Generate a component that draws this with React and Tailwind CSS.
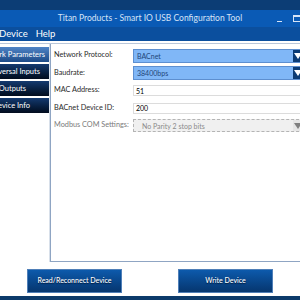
import React from 'react';

const font = { fontFamily: 'Lato, "Noto Sans", sans-serif' };

const NavItem = ({ label, active, pad }) => (
  <div
    className={`h-[15px] flex items-center justify-end overflow-hidden whitespace-nowrap text-[7.5px] text-white ${pad} ${
      active
        ? 'bg-gradient-to-b from-[#4f84c6] to-[#1d4b88]'
        : 'bg-gradient-to-b from-[#143a70] to-[#020c1e]'
    }`}
  >
    <span className="shrink-0">{label}</span>
  </div>
);

const Arrow = ({ muted }) => (
  <div
    className={`w-[10px] h-full flex items-center justify-center ${
      muted ? 'bg-[#e6e6e6]' : 'bg-[#0b3b74]'
    }`}
  >
    <svg width="8" height="6" viewBox="0 0 8 6">
      <path d="M0 0 L8 0 L4 6 Z" fill={muted ? '#808080' : '#ffffff'} />
    </svg>
  </div>
);

const Row = ({ label, muted, pad, children }) => (
  <div className="flex items-center h-[17.5px]">
    <div
      className={`w-[79px] shrink-0 whitespace-nowrap text-[7.3px] ${
        muted ? 'text-[#7a7a7a]' : 'text-[#2a2a2a]'
      }`}
    >
      {label}
    </div>
    <div className={`flex-1 h-full ${pad}`}>{children}</div>
  </div>
);

export default function App() {
  return (
    <div className="w-[300px] h-[300px] overflow-hidden bg-white flex flex-col" style={font}>
      <div className="h-[10px] bg-[#0c3d75]" />
      <div className="h-[17px] bg-[#0a5ab5] relative flex items-center justify-center">
        <span className="text-[8.5px] text-[#d6e4f7] whitespace-nowrap">
          Titan Products - Smart IO USB Configuration Tool
        </span>
        <div className="absolute right-0 top-0 h-full flex items-center gap-[11px]">
          <div className="w-[5px] h-[1px] bg-[#d6e4f7] mt-[6px]" />
          <div className="w-[8px] h-[7px] border border-[#d6e4f7] border-t-2 mr-[-1px]" />
        </div>
      </div>
      <div className="h-[14px] bg-[#0b4f9e] flex items-center gap-[8px] text-[9.5px] text-white">
        <span className="ml-[-1px]">Device</span>
        <span>Help</span>
      </div>
      <div className="h-[2px] bg-white" />
      <div className="h-[1px] bg-[#b9c7da]" />
      <div className="flex h-[218px]">
        <div className="w-[50px] shrink-0 flex flex-col gap-[2px] pt-[3px] border-r border-[#d8e0ea]">
          <NavItem label="Network Parameters" active pad="pr-[4px]" />
          <NavItem label="Universal Inputs" pad="pr-[9px]" />
          <NavItem label="Outputs" pad="pr-[23px]" />
          <NavItem label="Device Info" pad="pr-[19px]" />
        </div>
        <div className="flex-1 border-l border-b border-[#8fa5c3] pl-[3px] pt-[3px] mr-[-4px]">
          <Row label="Network Protocol:" pad="py-[1.75px]">
            <div className="h-full flex border border-[#5d8fd0] bg-[#80b7f7]">
              <div className="flex-1 pl-[3px] text-[7px] text-[#20467a] flex items-center">BACnet</div>
              <Arrow />
            </div>
          </Row>
          <Row label="Baudrate:" pad="py-[1.75px]">
            <div className="h-full flex border border-[#5d8fd0] bg-[#80b7f7]">
              <div className="flex-1 pl-[3px] text-[7px] text-[#20467a] flex items-center">38400bps</div>
              <Arrow />
            </div>
          </Row>
          <Row label="MAC Address:" pad="py-[3.25px]">
            <div className="h-full border border-[#dcdcdc] bg-white pl-[2px] text-[7px] text-black flex items-center">
              51
            </div>
          </Row>
          <Row label="BACnet Device ID:" pad="py-[3.25px]">
            <div className="h-full border border-[#dcdcdc] bg-white pl-[2px] text-[7px] text-black flex items-center">
              200
            </div>
          </Row>
          <Row label="Modbus COM Settings:" muted pad="py-[2.25px]">
            <div className="h-full flex border border-dashed border-[#b4b4b4] bg-[#f0f0f0]">
              <div className="flex-1 pl-[8px] text-[7px] text-[#8a8a8a] flex items-center">No Parity 2 stop bits</div>
              <Arrow muted />
            </div>
          </Row>
        </div>
      </div>
      <div className="flex-1 flex items-center justify-between px-[27px] pt-[3px]">
        <button className="w-[95px] h-[24px] bg-gradient-to-b from-[#0d5aac] to-[#06366f] border border-[#4f7fb8] text-white text-[7px] font-medium [text-shadow:0_1px_1px_#001a3a]">
          Read/Reconnect Device
        </button>
        <button className="w-[95px] h-[24px] bg-gradient-to-b from-[#0d5aac] to-[#06366f] border border-[#4f7fb8] text-white text-[7px] font-medium [text-shadow:0_1px_1px_#001a3a]">
          Write Device
        </button>
      </div>
      <div className="h-[4px] bg-[#0c3a6a]" />
    </div>
  );
}
